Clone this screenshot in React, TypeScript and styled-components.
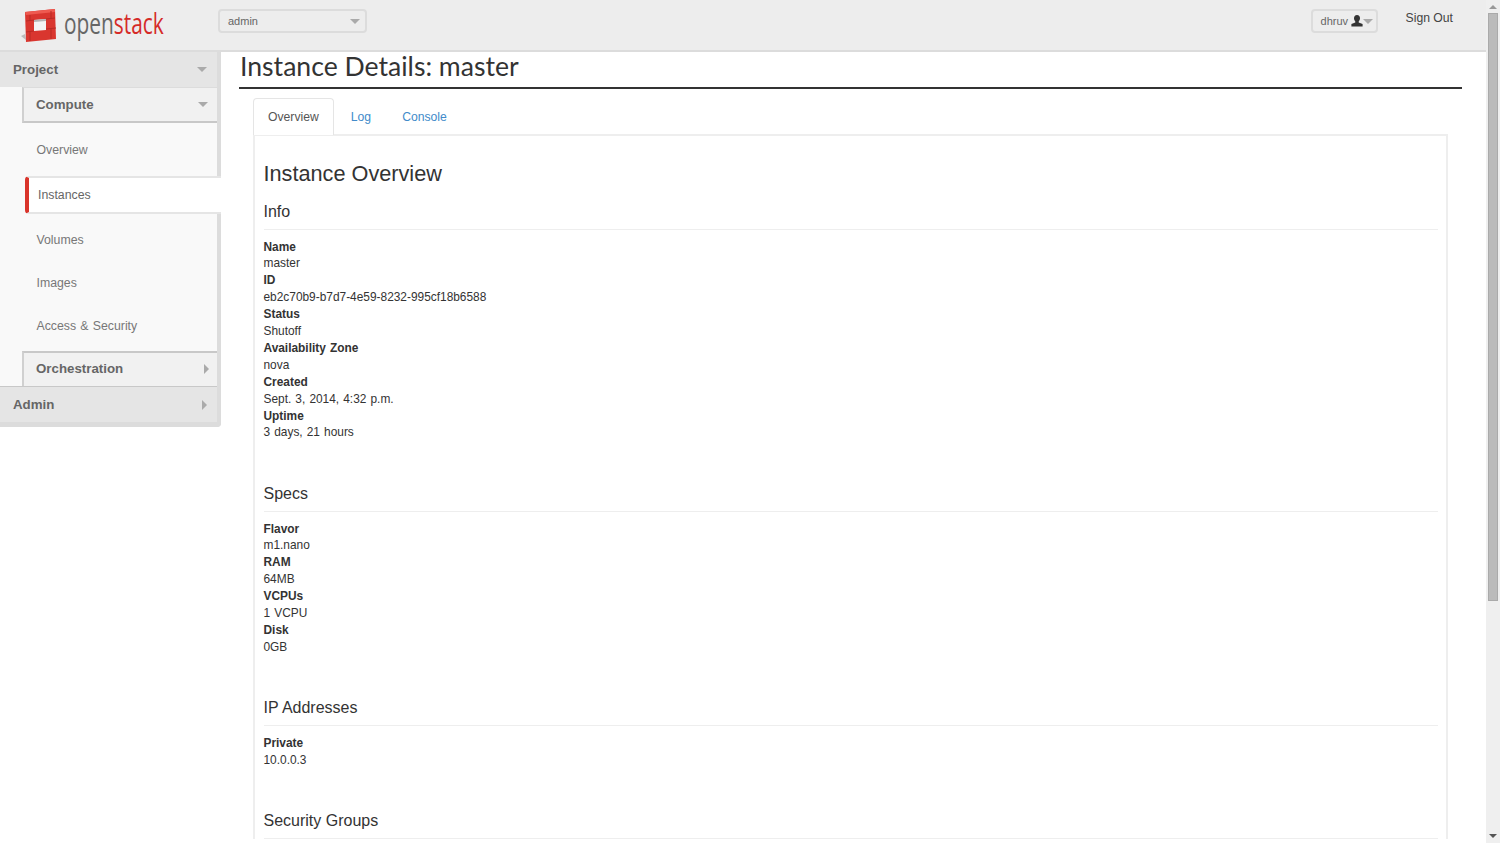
import styled, {createGlobalStyle} from "styled-components";

const GlobalStyle = createGlobalStyle`
  html, body {
    margin: 0;
    padding: 0;
    height: 100%;
    overflow: hidden;
    background: #fff;
  }
  body {
    font-family: "Liberation Sans", Arial, sans-serif;
    font-size: 11.9px;
    color: #333;
  }
  * {
    box-sizing: border-box;
  }
`

const Screen = styled.div`
  display: flex;
  width: 1500px;
  height: 843px;
  overflow: hidden;
`
const Page = styled.div`
  flex: 1;
  min-width: 0;
  display: flex;
  flex-direction: column;
`
const TopBar = styled.header`
  height: 52px;
  flex: none;
  display: flex;
  background: #ededed;
  border-bottom: 2px solid #dcdcdc;
`
const Brand = styled.a`
  width: 218px;
  flex: none;
  display: flex;
  align-items: flex-start;
  padding: 8px 0 0 20px;
`
const BrandName = styled.span`
  display: inline-block;
  margin: -2px 0 0 7px;
  font-family: "Open Sans", sans-serif;
  font-size: 29px;
  line-height: 34px;
  color: #666;
  transform: scaleX(0.72);
  transform-origin: left center;

  b {
    font-weight: normal;
    color: #d52b28;
  }
`
const Picker = styled.div<{ $width: number }>`
  width: ${props => props.$width}px;
  height: 24px;
  margin-top: 9px;
  padding: 0 5px 0 8px;
  display: flex;
  align-items: center;
  justify-content: space-between;
  border: 2px solid #dcdcdc;
  border-radius: 4px;
  font-size: 11px;
  color: #666;
`
const Caret = styled.i<{ $tone?: string; $size?: number }>`
  display: block;
  flex: none;
  width: 0;
  height: 0;
  border-style: solid;
  border-width: ${props => props.$size ?? 5}px ${props => props.$size ?? 5}px 0;
  border-color: ${props => props.$tone ?? "#aaa"} transparent transparent;
`
const Arrow = styled.i`
  display: block;
  flex: none;
  width: 0;
  height: 0;
  border-style: solid;
  border-width: 5px 0 5px 5px;
  border-color: transparent transparent transparent #aaa;
`
const UserArea = styled.div`
  margin-left: auto;
  display: flex;
  align-items: flex-start;
`
const UserName = styled.span`
  display: flex;
  align-items: center;
  gap: 3px;
`
const SignOut = styled.a`
  margin: 11px 33px 0 28px;
  font-size: 12.2px;
  line-height: 15px;
  color: #444;
`
const Body = styled.div`
  flex: 1;
  min-height: 0;
  display: flex;
  align-items: flex-start;
`
const Sidebar = styled.nav`
  width: 221px;
  flex: none;
  border-right: 4px solid #dcdcdc;
  border-bottom: 5px solid #dcdcdc;
  border-bottom-right-radius: 4px;
  background: #f9f9f9;
  color: #666;
`
const Panel = styled.div`
  height: 35px;
  padding: 0 10px 1px 13px;
  display: flex;
  align-items: center;
  justify-content: space-between;
  background: #e5e5e5;
  font-size: 13.3px;
  font-weight: bold;
`
const AdminPanel = styled(Panel)`
  height: 36px;
  padding-bottom: 0;
  border-top: 1px solid #c8c8c8;
`
const Group = styled.div`
  padding-left: 22px;
`
const GroupHead = styled.div`
  height: 36px;
  padding: 0 9px 0 12px;
  display: flex;
  align-items: center;
  justify-content: space-between;
  background: #f1f1f1;
  border-top: 1px solid #dcdcdc;
  border-left: 2px solid #d0d0d0;
  border-bottom: 2px solid #c8c8c8;
  font-size: 13.3px;
  font-weight: bold;
`
const ClosedGroupHead = styled(GroupHead)`
  height: 35px;
  padding-right: 8px;
  padding-bottom: 2px;
  border-top: 2px solid #c8c8c8;
  border-bottom: 0;
`
const NavList = styled.ul`
  list-style: none;
  margin: 0;
  padding: 5px 0 4px;
`
const NavItem = styled.li<{ $active?: boolean }>`
  height: ${props => props.$active ? 38 : 43}px;
  display: flex;
  align-items: center;
  font-size: 12.3px;
  word-spacing: 0.8px;
  color: ${props => props.$active ? "#666" : "#777"};
  padding-left: ${props => props.$active ? 9 : 14.5}px;
  ${props => props.$active && `
    position: relative;
    margin: 5px -4px 4px 3px;
    background: #fff;
    border: 2px solid #e5e5e5;
    border-width: 2px 0;
    border-left: 4px solid #d9342b;
    border-radius: 4px 0 0 4px;
  `}
`
const Main = styled.main`
  flex: 1;
  min-width: 0;
  padding-left: 18px;
  padding-right: 24px;
`
const PageTitle = styled.h1`
  margin: 0;
  height: 37px;
  border-bottom: 2px solid #333;
  font-family: Lato, sans-serif;
  font-size: 26.6px;
  font-weight: 400;
  line-height: 28px;
  color: #333;
  padding-left: 1px;
`
const Tabs = styled.ul`
  list-style: none;
  display: flex;
  margin: 9px 14px 0;
  padding: 0;
  position: relative;
  z-index: 1;
  font-size: 12.2px;
`
const Tab = styled.li<{ $active?: boolean }>`
  height: 37px;
  padding: 0 14px;
  margin-right: 3px;
  display: flex;
  align-items: center;
  color: ${props => props.$active ? "#555" : "#428bca"};
  ${props => props.$active && `
    background: #fff;
    border: 1px solid #e5e5e5;
    border-bottom: 0;
    border-radius: 4px 4px 0 0;
  `}
`
const TabBody = styled.div`
  margin: -1px 14px 0;
  padding: 25px 8px 0 8.5px;
  border: 2px solid #eee;
  border-bottom: 0;
`
const OverviewTitle = styled.h3`
  margin: 0 0 14.5px;
  font-size: 21.7px;
  font-weight: 500;
  line-height: 26px;
  color: #333;
`
const Section = styled.section`
  margin-bottom: 42.2px;
`
const SectionTitle = styled.h4`
  margin: 0 0 9px;
  padding-bottom: 8px;
  border-bottom: 1px solid #eee;
  font-size: 16px;
  font-weight: 500;
  line-height: 19px;
  color: #333;
`
const Fields = styled.dl`
  margin: 0;
  line-height: 16.9px;
  word-spacing: 0.8px;

  dt {
    font-weight: bold;
  }

  dd {
    margin: 0;
  }
`
const ScrollTrack = styled.div`
  width: 14px;
  flex: none;
  height: 100%;
  padding: 2px 2px 5px;
  display: flex;
  flex-direction: column;
  align-items: center;
  background: #efefef;
`
const ScrollThumb = styled.div`
  width: 10px;
  height: 588px;
  margin-top: 4px;
  margin-bottom: auto;
  background: #bbb;
  border: 1px solid #aaa;
`
const ScrollUp = styled.i`
  display: block;
  margin-top: 3px;
  width: 0;
  height: 0;
  border-style: solid;
  border-width: 0 4px 4px;
  border-color: transparent transparent #999;
`

function Logo() {
    return (
        <svg width="37" height="35" viewBox="0 0 37 35">
            <path d="M1 28l4-2 1 6z" fill="#bbb"/>
            <path d="M5 4L35 1l1 30-30 3z" fill="#d9362f"/>
            <path d="M5 4L35 1l0 3-29 3z" fill="#ee5a50"/>
            <path d="M14 12l12-1v11l-12 1z" fill="#f4f4f4"/>
            <path d="M14 12l12-1v2l-12 1z" fill="#b5b5b5"/>
            <path d="M6 13l8-1M6 24l8-1M26 11l9-1M26 21l10-1M10 7v6M31 3v8M10 24v9M31 21v10" stroke="#b92a25" strokeWidth="1" fill="none"/>
        </svg>
    )
}

function UserIcon() {
    return (
        <svg width="12" height="12" viewBox="0 0 12 12">
            <path d="M6 0c2 0 3 1.400 3 3.200 0 1.300-.6 2.500-1.300 3.200v1L11.600 9v2.600H.4V9l3.900-1.600v-1C3.600 5.700 3 4.500 3 3.200 3 1.400 4 0 6 0z" fill="#333"/>
        </svg>
    )
}

interface IField {
    label: string,
    value: string
}

interface ISection {
    title: string,
    fields: IField[]
}

const sections: ISection[] = [
    {
        title: "Info",
        fields: [
            {label: "Name", value: "master"},
            {label: "ID", value: "eb2c70b9-b7d7-4e59-8232-995cf18b6588"},
            {label: "Status", value: "Shutoff"},
            {label: "Availability Zone", value: "nova"},
            {label: "Created", value: "Sept. 3, 2014, 4:32 p.m."},
            {label: "Uptime", value: "3 days, 21 hours"},
        ],
    },
    {
        title: "Specs",
        fields: [
            {label: "Flavor", value: "m1.nano"},
            {label: "RAM", value: "64MB"},
            {label: "VCPUs", value: "1 VCPU"},
            {label: "Disk", value: "0GB"},
        ],
    },
    {
        title: "IP Addresses",
        fields: [
            {label: "Private", value: "10.0.0.3"},
        ],
    },
    {
        title: "Security Groups",
        fields: [],
    },
]

const computeLinks = ["Overview", "Instances", "Volumes", "Images", "Access & Security"]

function App() {
    return (
        <Screen>
            <GlobalStyle/>
            <Page>
                <TopBar>
                    <Brand>
                        <Logo/>
                        <BrandName>open<b>stack</b></BrandName>
                    </Brand>
                    <Picker $width={149}>
                        admin
                        <Caret/>
                    </Picker>
                    <UserArea>
                        <Picker $width={67}>
                            <UserName>dhruv <UserIcon/></UserName>
                            <Caret/>
                        </Picker>
                        <SignOut>Sign Out</SignOut>
                    </UserArea>
                </TopBar>
                <Body>
                    <Sidebar>
                        <Panel>Project <Caret/></Panel>
                        <Group>
                            <GroupHead>Compute <Caret/></GroupHead>
                            <NavList>
                                {computeLinks.map(link => (
                                    <NavItem key={link} $active={link === "Instances"}>{link}</NavItem>
                                ))}
                            </NavList>
                            <ClosedGroupHead>Orchestration <Arrow/></ClosedGroupHead>
                        </Group>
                        <AdminPanel>Admin <Arrow/></AdminPanel>
                    </Sidebar>
                    <Main>
                        <PageTitle>Instance Details: master</PageTitle>
                        <Tabs>
                            <Tab $active>Overview</Tab>
                            <Tab>Log</Tab>
                            <Tab>Console</Tab>
                        </Tabs>
                        <TabBody>
                            <OverviewTitle>Instance Overview</OverviewTitle>
                            {sections.map(section => (
                                <Section key={section.title}>
                                    <SectionTitle>{section.title}</SectionTitle>
                                    <Fields>
                                        {section.fields.map(field => (
                                            <div key={field.label}>
                                                <dt>{field.label}</dt>
                                                <dd>{field.value}</dd>
                                            </div>
                                        ))}
                                    </Fields>
                                </Section>
                            ))}
                        </TabBody>
                    </Main>
                </Body>
            </Page>
            <ScrollTrack>
                <ScrollUp/>
                <ScrollThumb/>
                <Caret $tone="#555" $size={4}/>
            </ScrollTrack>
        </Screen>
    )
}

export default App
